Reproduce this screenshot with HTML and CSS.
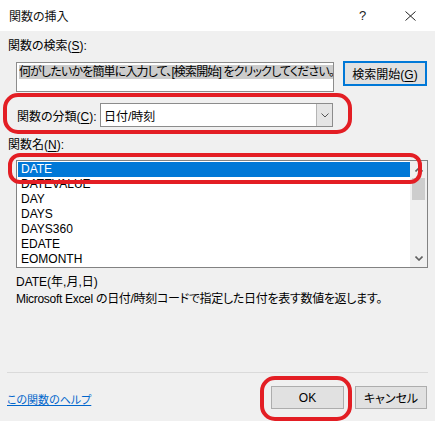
FILE: index.html
```html
<!DOCTYPE html>
<html lang="ja">
<head>
  <meta charset="UTF-8" />
  <title>関数の挿入</title>
  <link rel="stylesheet" href="styles.css">
</head>
<body>
  <div class="dialog">
    <!-- Title bar -->
    <div class="titlebar">
      <span class="title">関数の挿入</span>
      <span class="help">?</span>
      <span class="close">
        <svg width="11" height="10" viewBox="0 0 11 10"><path d="M0.5 0.5 L10.5 9.5 M10.5 0.5 L0.5 9.5" stroke="#222" stroke-width="1" fill="none"/></svg>
      </span>
    </div>

    <div class="content">
      <!-- Search -->
      <div class="label">関数の検索(<u>S</u>):</div>
      <div class="search-row">
        <div class="search-box"><span class="sel">何がしたいかを簡単に入力して、[検索開始] をクリックしてください。</span></div>
        <button class="btn default">検索開始(<u>G</u>)</button>
      </div>

      <!-- Category -->
      <div class="cat-row">
        <span class="mark mark-cat"></span>
        <span class="cat-label">関数の分類(<u>C</u>):</span>
        <div class="select">
          <span class="select-text">日付/時刻</span>
          <span class="drop">
            <svg width="8" height="5" viewBox="0 0 8 5"><path d="M0.5 0.5 L4 4 L7.5 0.5" stroke="#555" stroke-width="1" fill="none"/></svg>
          </span>
        </div>
      </div>

      <!-- Function list -->
      <div class="label name-label">関数名(<u>N</u>):</div>
      <div class="listbox">
        <span class="mark mark-list"></span>
        <ul class="items">
          <li class="selected">DATE</li>
          <li>DATEVALUE</li>
          <li>DAY</li>
          <li>DAYS</li>
          <li>DAYS360</li>
          <li>EDATE</li>
          <li>EOMONTH</li>
        </ul>
        <div class="scrollbar">
          <span class="arrow">
            <svg width="8" height="5" viewBox="0 0 8 5"><path d="M0.5 4.5 L4 1 L7.5 4.5" stroke="#606060" stroke-width="1.6" fill="none"/></svg>
          </span>
          <span class="thumb"></span>
          <span class="track"></span>
          <span class="arrow">
            <svg width="8" height="5" viewBox="0 0 8 5"><path d="M0.5 0.5 L4 4 L7.5 0.5" stroke="#606060" stroke-width="1.6" fill="none"/></svg>
          </span>
        </div>
      </div>

      <div class="syntax">DATE(年,月,日)</div>
      <div class="desc">Microsoft Excel の日付/時刻コードで指定した日付を表す数値を返します。</div>

      <div class="separator"></div>

      <!-- Footer -->
      <div class="footer">
        <a class="help-link">この関数のヘルプ</a>
        <div class="buttons">
          <button class="btn ok">OK<span class="mark mark-ok"></span></button>
          <button class="btn cancel">キャンセル</button>
        </div>
      </div>
    </div>
  </div>
</body>
</html>
```

FILE: styles.css
```css
* { box-sizing: border-box; }
body {
  margin: 0;
  background: #f0f0f0;
  font-family: "Liberation Sans", "Noto Sans CJK JP", sans-serif;
  font-size: 12px;
  color: #000;
  font-feature-settings: "palt";
}
u { text-decoration-thickness: 1px; text-underline-offset: 2px; }
.dialog {
  width: 435px;
  height: 421px;
  overflow: hidden;
}
.titlebar {
  height: 31px;
  background: #fff;
  display: flex;
  align-items: center;
  padding-left: 9px;
}
.title {
  flex: 1;
  font-size: 12px;
  color: #111;
}
.help {
  width: 12px;
  margin-right: 34px;
  font-size: 13px;
  color: #222;
}
.close {
  display: flex;
  margin-right: 19px;
}
.content {
  padding: 8px 7px 0 8px;
}
.label {
  line-height: 15px;
}
.search-row {
  display: flex;
  align-items: flex-start;
  margin-top: 7px;
  padding-left: 8px;
}
.search-box {
  width: 318px;
  height: 30px;
  margin-top: 1px;
  margin-right: 9px;
  background: #fff;
  border: 1px solid #8c8c8c;
  padding: 2px 2px 0 2px;
  line-height: 14px;
  white-space: nowrap;
  overflow: hidden;
  letter-spacing: -0.85px;
}
.sel {
  background: #cccccc;
  display: inline-block;
  padding-right: 2px;
}
.btn {
  font-family: inherit;
  font-size: 12px;
  font-feature-settings: "palt";
  background: #e1e1e1;
  border: 1px solid #adadad;
  color: #000;
  padding: 0;
  position: relative;
}
.btn.default {
  width: 84px;
  height: 25px;
  border: 2px solid #0078d7;
}
.cat-row {
  position: relative;
  display: flex;
  align-items: center;
  margin-top: 11px;
  padding-left: 9px;
  height: 24px;
}
.cat-label {
  width: 83px;
}
.select {
  width: 233px;
  height: 24px;
  background: #fff;
  border: 1px solid #8c8c8c;
  display: flex;
  align-items: center;
}
.select-text {
  flex: 1;
  padding-left: 3px;
}
.drop {
  width: 16px;
  height: 22px;
  background: #e5e5e5;
  border-left: 1px solid #b5b5b5;
  display: flex;
  align-items: center;
  justify-content: center;
}
.name-label {
  margin-top: 11px;
}
.listbox {
  position: relative;
  margin: 7px 0 0 8px;
  width: 412px;
  height: 108px;
  border: 1px solid #828282;
  background: #fff;
  display: flex;
  padding: 1px 0 0 1px;
}
.items {
  list-style: none;
  margin: 0;
  padding: 0;
  flex: 1;
}
.items li {
  height: 15px;
  line-height: 15px;
  padding-left: 3px;
}
.items li.selected {
  background: #0078d7;
  color: #fff;
}
.scrollbar {
  width: 17px;
  background: #f0f0f0;
  display: flex;
  flex-direction: column;
  margin-top: -1px;
}
.arrow {
  height: 17px;
  display: flex;
  align-items: center;
  justify-content: center;
}
.thumb {
  height: 22px;
  margin: 0 2px;
  background: #cdcdcd;
}
.track { flex: 1; }
.syntax {
  margin: 6px 0 0 8px;
  line-height: 17px;
}
.desc {
  margin-left: 8px;
  line-height: 17px;
  letter-spacing: -0.3px;
}
.separator {
  margin-top: 64px;
  height: 1px;
  background: #dadada;
  margin-left: -1px;
}
.footer {
  display: flex;
  align-items: center;
  margin-top: 13px;
  margin-left: -1px;
}
.help-link {
  flex: 1;
  color: #0066cc;
  text-decoration: underline;
  font-size: 11px;
  margin-top: 2px;
}
.buttons {
  display: flex;
  gap: 11px;
  margin-right: 1px;
}
.btn.ok {
  width: 73px;
  height: 23px;
}
.btn.cancel {
  width: 72px;
  height: 23px;
}
/* red annotation rings */
.mark {
  position: absolute;
  border: 4px solid #e31e24;
  pointer-events: none;
}
.mark-cat {
  left: -5px;
  top: -10px;
  width: 349px;
  height: 41px;
  border-radius: 15px;
}
.mark-list {
  left: -9px;
  top: -8px;
  width: 414px;
  height: 31px;
  border-radius: 12px;
}
.mark-ok {
  left: -12px;
  top: -11px;
  width: 92px;
  height: 45px;
  border-radius: 15px;
}
```
